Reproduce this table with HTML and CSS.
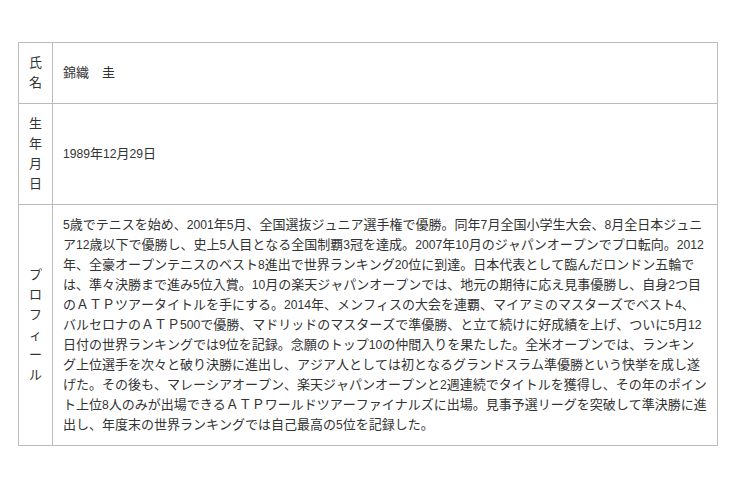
FILE: index.html
```html
<!DOCTYPE html>
<html lang="ja">
  <head>
    <meta charset="UTF-8">
    <title>プロフィール</title>
    <link rel="stylesheet" href="styles.css">
  </head>

  <body>
    <table class="profile">
      <tr>
        <th>氏名</th>
        <td>錦織　圭</td>
      </tr>
      <tr>
        <th>生年月日</th>
        <td><span class="num">1989</span>年<span class="num">12</span>月<span class="num">29</span>日</td>
      </tr>
      <tr>
        <th>プロフィール</th>
        <td><span class="num">5</span>歳でテニスを始め、<span class="num">2001</span>年<span class="num">5</span>月、全国選抜ジュニア選手権で優勝。同年<span class="num">7</span>月全国小学生大会、<span class="num">8</span>月全日本ジュニア<span class="num">12</span>歳以下で優勝し、史上<span class="num">5</span>人目となる全国制覇<span class="num">3</span>冠を達成。<span class="num">2007</span>年<span class="num">10</span>月のジャパンオープンでプロ転向。<span class="num">2012</span>年、全豪オープンテニスのベスト<span class="num">8</span>進出で世界ランキング<span class="num">20</span>位に到達。日本代表として臨んだロンドン五輪では、準々決勝まで進み<span class="num">5</span>位入賞。<span class="num">10</span>月の楽天ジャパンオープンでは、地元の期待に応え見事優勝し、自身<span class="num">2</span>つ目のＡＴＰツアータイトルを手にする。<span class="num">2014</span>年、メンフィスの大会を連覇、マイアミのマスターズでベスト<span class="num">4</span>、バルセロナのＡＴＰ<span class="num">500</span>で優勝、マドリッドのマスターズで準優勝、と立て続けに好成績を上げ、ついに<span class="num">5</span>月<span class="num">12</span>日付の世界ランキングでは<span class="num">9</span>位を記録。念願のトップ<span class="num">10</span>の仲間入りを果たした。全米オープンでは、ランキング上位選手を次々と破り決勝に進出し、アジア人としては初となるグランドスラム準優勝という快挙を成し遂げた。その後も、マレーシアオープン、楽天ジャパンオープンと<span class="num">2</span>週連続でタイトルを獲得し、その年のポイント上位<span class="num">8</span>人のみが出場できるＡＴＰワールドツアーファイナルズに出場。見事予選リーグを突破して準決勝に進出し、年度末の世界ランキングでは自己最高の<span class="num">5</span>位を記録した。</td>
      </tr>
    </table>
  </body>
</html>
```

FILE: styles.css
```css
* {
  font-family: 'Liberation Sans', 'Noto Sans CJK JP', sans-serif;
}
html, body {
  margin: 0;
  padding: 0;
  background: #fff;
}
.profile {
  margin: 42px 0 0 18px;
  border-collapse: collapse;
  font-size: 13px;
  line-height: 20px;
  color: #333;
  font-kerning: none;
  text-spacing-trim: space-all;
}
.profile th, .profile td {
  border: 1px solid #bbb;
  padding: 10px;
  vertical-align: middle;
}
.profile th {
  width: 13px;
  font-weight: normal;
  text-align: center;
  line-break: anywhere;
  word-break: break-all;
}
.profile td {
  width: 644px;
  text-align: left;
}
/* half-width digits run a little narrower than Arial at 13px */
.num {
  font-size: 12.15px;
}
```
